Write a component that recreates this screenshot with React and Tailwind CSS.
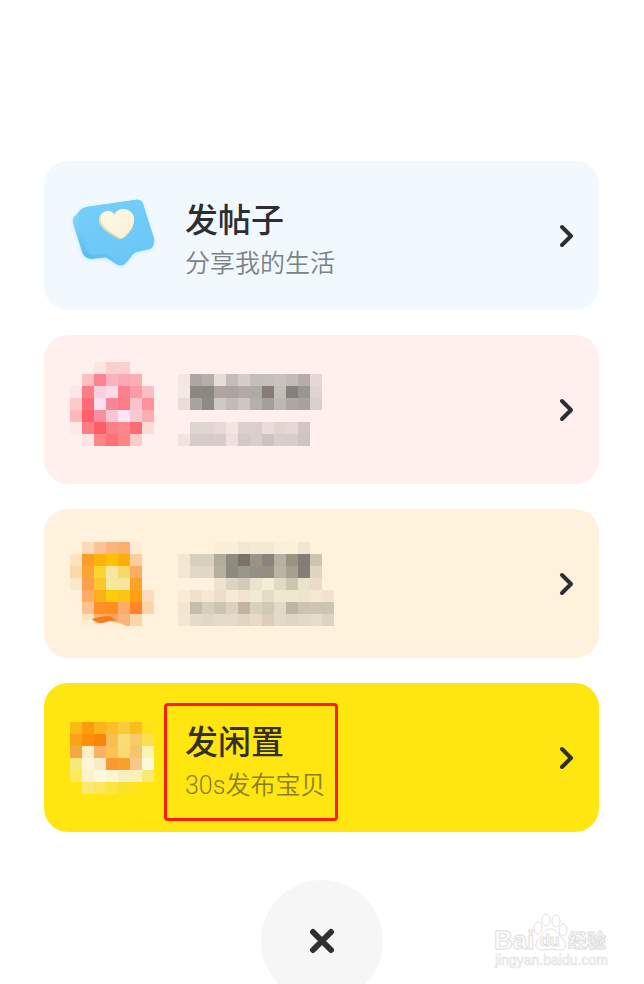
const BLOCK = 12;

// Each row lists the colours of its blocks; an empty string leaves a gap.
function Mosaic({ rows, label, className, children }) {
  const cols = Math.max(...rows.map((row) => row.length));
  return (
    <svg
      role="img"
      aria-label={label}
      className={className}
      width={cols * BLOCK}
      height={rows.length * BLOCK}
    >
      <g shapeRendering="crispEdges">
        {rows.map((row, y) =>
          row.map((fill, x) =>
            fill ? (
              <rect key={`${x}-${y}`} x={x * BLOCK} y={y * BLOCK} width={BLOCK} height={BLOCK} fill={fill} />
            ) : null
          )
        )}
      </g>
      {children}
    </svg>
  );
}

const pinkIcon = [
  ["", "", "#fee5e2", "#fbced0", "#fbd0d0", "", ""],
  ["", "#fbc0c4", "#fb8491", "#fcb2bc", "#fbaab5", "#fbafb4", ""],
  ["#fde7e5", "#fd7d87", "#fbd0dc", "#fadbe7", "#fb7f8f", "#f99ba9", "#fbbec2"],
  ["#fccac9", "#fd6b77", "#fbe1ef", "#f98698", "#fb7c8a", "#fac2d0", "#fb929e"],
  ["#fdb8ba", "#fe606d", "#f98fa0", "#fac5d3", "#fde5f3", "#fac8d5", "#fcadb3"],
  ["#fee9e7", "#fd7c85", "#fe5c69", "#fd7f87", "#fd858c", "#fd6b77", "#fddbd6"],
  ["", "#fee6e2", "#fe8689", "#fd7276", "#fd8586", "#fdcbc8", ""],
  [],
];

const pinkText = [
  ["#f3e7e3", "#b1a5a2", "#b5afaa", "#e6dcd8", "#c6bbb8", "#d8cccb", "#c6bdb8", "#c8beb9", "#cbc2bc", "#c5bbb6", "#b7ada8", "#e5d7d6"],
  ["#f5e9e5", "#8d8981", "#8b8881", "#aea4a0", "#a8a69f", "#b2a9a7", "#aeaaa4", "#867b77", "#c2beb8", "#84817b", "#9a9590", "#e0d4d2"],
  ["#e9dcd9", "#aaa29f", "#8e8b85", "#d0c8c4", "#c3bbb7", "#cfc6c4", "#b5b0aa", "#a2a09a", "#bdb8b3", "#aea6a3", "#aaa19f", "#dad0ce"],
  [],
  ["", "#dfd5d0", "#e1d4d1", "#e6d9d7", "#f4e5e2", "#dbd0ce", "#dbcfcd", "#ebdcdb", "#e1d4d1", "#e6d8d6", "#d2c5c4", ""],
  ["#f0e3e0", "#d8cccb", "#d6cbc9", "#d8cccb", "#efdfde", "#d3c9c8", "#d9cecc", "#cec3c2", "#d8cecc", "#d8cdca", "#cfc4c4", ""],
];

const orangeIcon = [
  ["", "#fdd9b9", "#fcc397", "#fbb57c", "#fbb071", "#feebd5", ""],
  ["#fde3c0", "#fc9d29", "#fdb40a", "#ffc005", "#fcaf0b", "#fccd9e", ""],
  ["#fcd8a8", "#fca436", "#f9d52d", "#f7e7a0", "#f5db65", "#fbae60", ""],
  ["#fbe8cc", "#fc9e4d", "#f9c729", "#f7e79e", "#f6e49f", "#faa32a", ""],
  ["#fef0dc", "#fdac66", "#fcb017", "#fccb0b", "#fcc414", "#fda111", "#fddcbb"],
  ["", "#fdc28e", "#fe9028", "#ff8d20", "#fcad67", "#ff8426", "#fcd4a9"],
  ["", "#fce3c1", "#f9b66b", "#fba55f", "#fbb47b", "#fdd5ab", ""],
];

const orangeText = [
  ["", "", "", "#fbefda", "#fbefd9", "#f2e8d2", "#f3e9d4", "#f6e9d4", "#fcefda", "#fdf0da", "#f1e7d1", "", ""],
  ["#f3e7d1", "#d9d1bd", "#d9d0bd", "#b1ac9c", "#8f8c7f", "#7b7167", "#989585", "#8a857c", "#b6b0a3", "#99937f", "#827d77", "#ccc4b1", ""],
  ["#f4e6d1", "#e2d8c7", "#e1d7c4", "#b8b09f", "#8c8b7f", "#9a978a", "#929083", "#91907f", "#b8b5a5", "#a3a18f", "#837e77", "#dfd5c2", ""],
  ["", "", "", "#efe2ce", "#dfd4c1", "#d5c9b8", "#ebe3ce", "#f3eed5", "#e0dcc3", "#cbc5b1", "#e9e3cc", "#e9dcc8", ""],
  ["#f9ebd5", "#efe2cd", "#f6e9d2", "#ecdfcc", "#f7ead7", "#f2e5cf", "#f2ebd3", "#e4ddc5", "#efe7ce", "#efe8d0", "#ede5ce", "#f6e8d3", "#f1e3cf"],
  ["#f3e6d0", "#c6beac", "#d7cfbc", "#cbc4b1", "#dbd3bf", "#c1b4a3", "#d9d1bb", "#d1c8b6", "#e2d9c9", "#bdb6a5", "#ccc3b2", "#cdc4b2", "#cdc4b2"],
  ["#f3e6d2", "#e5dcc8", "#e0d8c6", "#e4dcc8", "#e4dbc8", "#dfd6c3", "#e8dcc8", "#dbcfbc", "#e3dac7", "#dfd6c4", "#e2d9c7", "#e6dccb", "#ddd4c2"],
];

const yellowIcon = [
  ["#f9ba14", "#fa9c0e", "#f9b51b", "#fabf27", "#f9ca3a", "#fbbc1e", "#fde11b"],
  ["#faa21a", "#fd9004", "#fa8508", "#f9bd52", "#fbdc72", "#f9ca68", "#fae14c"],
  ["#f2aa3e", "#fcedc4", "#fab164", "#fac354", "#fbd973", "#f6c56b", "#fdf3b5"],
  ["#f8e87c", "#fcf6d6", "#fbecc9", "#fa992e", "#faa02d", "#f8c886", "#fef9da"],
  ["#fce957", "#faf3ca", "#fef9da", "#fcf7d1", "#f8efc1", "#f9f0bd", "#f9e778"],
  ["", "#fbe870", "#fce65d", "#fce541", "#fbe22a", "#fde41c", ""],
];

function HeartBubble() {
  return (
    <svg width="88" height="76" viewBox="0 0 88 76" role="img" aria-label="帖子">
      <defs>
        <linearGradient id="bubbleFace" x1="0.2" y1="0" x2="0.6" y2="1">
          <stop offset="0" stopColor="#74cefa" />
          <stop offset="1" stopColor="#69c7f8" />
        </linearGradient>
        <linearGradient id="bubbleSide" x1="0" y1="0" x2="1" y2="1">
          <stop offset="0" stopColor="#8edcf9" />
          <stop offset="0.5" stopColor="#5bbdf0" />
          <stop offset="1" stopColor="#6fd0f8" />
        </linearGradient>
        <linearGradient id="heartFill" x1="0" y1="0" x2="1" y2="1">
          <stop offset="0" stopColor="#fffae6" />
          <stop offset="1" stopColor="#f8f0d6" />
        </linearGradient>
        <filter id="bubbleShadow" x="-20%" y="-20%" width="140%" height="150%">
          <feDropShadow dx="0" dy="1" stdDeviation="2" floodColor="#9bdcf8" floodOpacity="0.5" />
        </filter>
      </defs>
      <path
        filter="url(#bubbleShadow)"
        fill="url(#bubbleSide)"
        d="M10 12Q13 10 17 9L65 2Q71 1 73 6L84 42Q85 48 80 51L67 54Q63 55 61 59L55 66Q51 69 46 66L37 60Q35 59 31 60L21 61Q14 60 12 54L3 25Q2 20 6 17Z"
      />
      <path
        fill="url(#bubbleFace)"
        d="M16 9L65 2Q71 1 73 6L84 40Q85 46 80 48L66 51Q62 52 60 56L54 63Q51 67 46 63L38 57Q35 55 31 56L23 57Q18 56 16 51L9 19Q8 11 16 9Z"
      />
      <path
        fill="#e6dda8"
        d="M49 41Q31 32 29 24Q28 16 35 14Q40 12 43 17Q47 10 54 11Q63 13 64 20Q65 29 56 38Q52 42 49 41Z"
      />
      <path
        fill="url(#heartFill)"
        d="M51 40Q33 31 31 23Q29 15 36 13Q41 12 45 17Q48 10 55 11Q63 13 64 20Q65 29 56 37Q53 41 51 40Z"
      />
    </svg>
  );
}

function Chevron() {
  return (
    <svg width="16" height="24" viewBox="0 0 16 24" fill="none" stroke="#2d2e32" strokeWidth="4" strokeLinecap="round" strokeLinejoin="round" aria-hidden="true">
      <path d="M3 3L12 12L3 21" />
    </svg>
  );
}

function Card({ color, icon, children }) {
  return (
    <button type="button" className={`relative flex h-[149px] w-full items-center rounded-3xl pr-6 pl-[26px] text-left ${color}`}>
      <span className="w-[108px] shrink-0">{icon}</span>
      <span className="flex-1">{children}</span>
      <Chevron />
    </button>
  );
}

function CardText({ title, subtitle, titleColor, subtitleColor }) {
  return (
    <span className="block pt-1 pl-[7px]">
      <span className={`block text-[33px] leading-[52px] font-medium ${titleColor}`}>{title}</span>
      <span className={`block text-[25px] leading-[34px] font-[350] ${subtitleColor}`}>{subtitle}</span>
    </span>
  );
}

function Watermark() {
  return (
    <svg className="absolute right-[34px] bottom-3 font-['Liberation_Sans','Noto_Sans_CJK_SC',sans-serif]" width="118" height="62" viewBox="0 0 118 62" fill="#ffffff" stroke="#dedede" strokeWidth="1" role="img" aria-label="Baidu 经验">
      <text x="2" y="39" fontSize="26" fontWeight="700">Bai</text>
      <ellipse cx="46" cy="18" rx="4" ry="6" />
      <ellipse cx="54" cy="10" rx="4" ry="6" />
      <ellipse cx="64" cy="11" rx="4" ry="6" />
      <ellipse cx="71" cy="20" rx="4" ry="6" />
      <path d="M59 19C64 19 66 24 70 28C76 33 74 41 67 40Q59 38 51 40C43 41 42 33 47 28C51 24 53 19 59 19Z" />
      <text x="48" y="36" fontSize="16" fontWeight="700">du</text>
      <text x="76" y="38" fontSize="19" fontWeight="700">经验</text>
      <text x="3" y="55" fontSize="14" strokeWidth="0.6">jingyan.baidu.com</text>
    </svg>
  );
}

export default function App() {
  return (
    <main className="relative h-screen overflow-hidden bg-white pt-[161px] pr-[45px] pl-[44px] font-[Roboto,'Noto_Sans_CJK_SC',sans-serif]">
      <div className="flex flex-col gap-[25px]">
        <Card color="bg-[#f1f9ff]" icon={<HeartBubble />}>
          <CardText title="发帖子" subtitle="分享我的生活" titleColor="text-[#2d2e32]" subtitleColor="text-[#7b8187]" />
        </Card>
        <Card color="bg-[#fff0ee]" icon={<Mosaic rows={pinkIcon} label="图标" />}>
          <Mosaic rows={pinkText} label="已打码" />
        </Card>
        <Card
          color="bg-[#fff2dd]"
          icon={
            <Mosaic rows={orangeIcon} label="图标">
              <path fill="#fff0d4" d="M10 84L14 78Q24 77 32 79Q48 79 56 84Z" />
              <path fill="#f87c1c" d="M22 77Q30 74 40 74L46 78Q38 79 33 81Q26 82 22 77Z" />
            </Mosaic>
          }
        >
          <Mosaic rows={orangeText} label="已打码" />
        </Card>
        <Card color="bg-[#ffe611]" icon={<Mosaic rows={yellowIcon} label="图标" />}>
          <CardText title="发闲置" subtitle="30s发布宝贝" titleColor="text-[#33301f]" subtitleColor="text-[#8b7f1c]" />
          <span className="absolute top-5 left-[120px] h-[118px] w-[174px] rounded-sm border-3 border-[#ff1c0d]" />
        </Card>
      </div>
      <button type="button" aria-label="关闭" className="mx-auto mt-12 flex size-[122px] items-center justify-center rounded-full bg-[#f6f6f6]">
        <svg width="26" height="26" viewBox="0 0 26 26" stroke="#303033" strokeWidth="6" strokeLinecap="round" aria-hidden="true">
          <path d="M4 4L22 22M22 4L4 22" />
        </svg>
      </button>
      <Watermark />
    </main>
  );
}
